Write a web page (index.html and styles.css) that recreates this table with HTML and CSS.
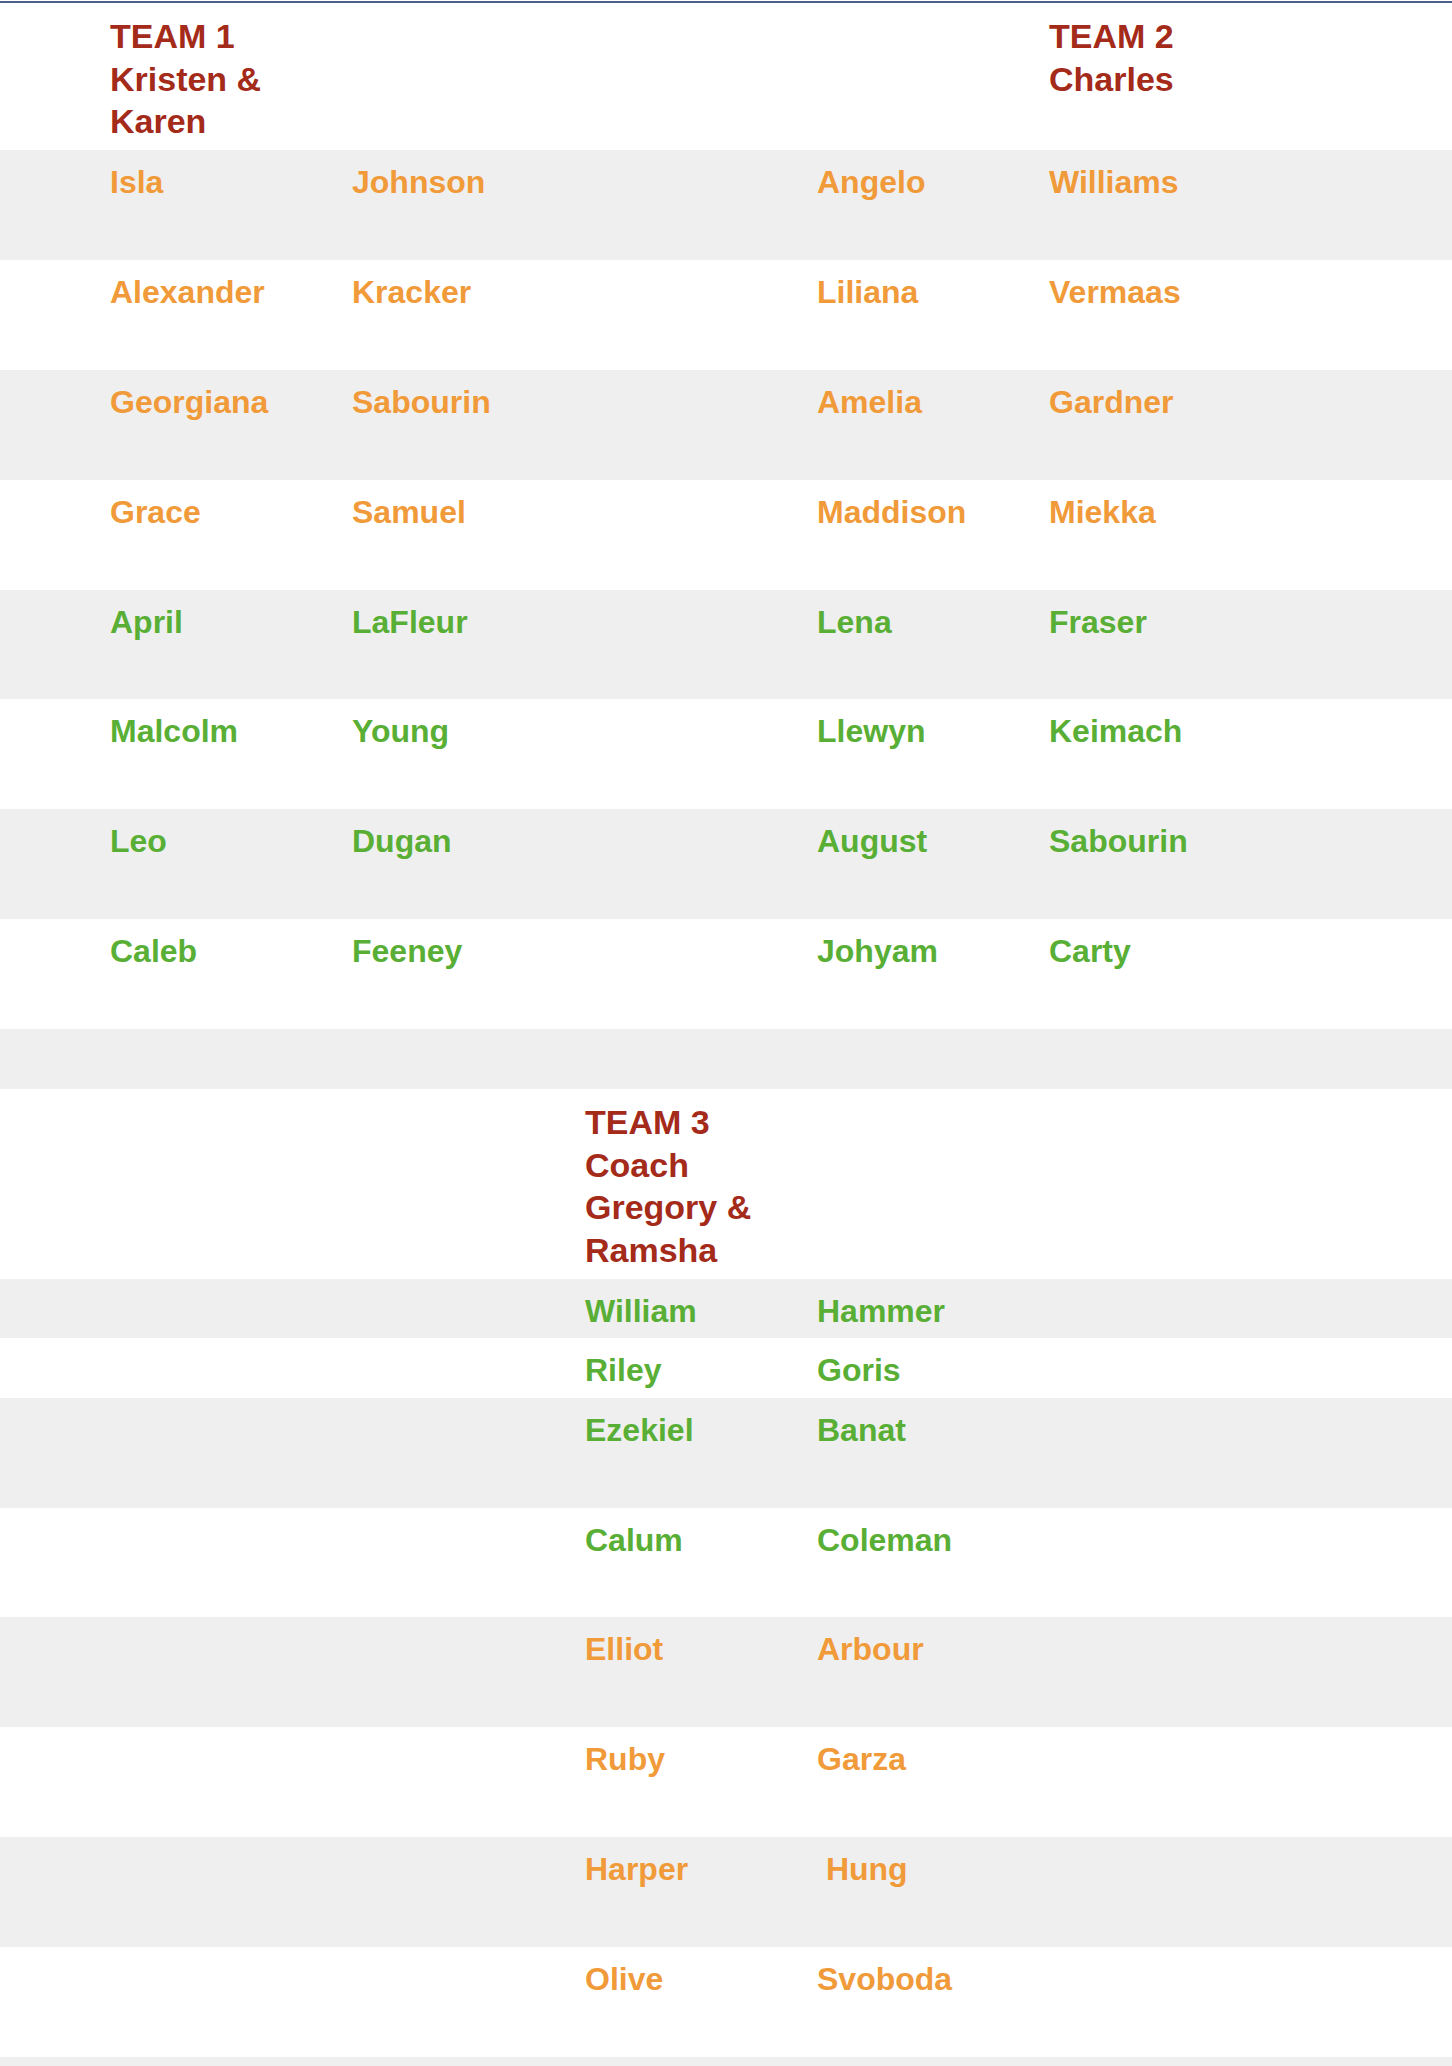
FILE: index.html
```html
<!DOCTYPE html>
<html>
<head>
<meta charset="utf-8">
<link rel="stylesheet" href="styles.css">
</head>
<body>
<div class="rule"></div>
<div class="roster">
  <div class="row head">
    <div class="c2 team">TEAM 1<br>Kristen &amp;<br>Karen</div>
    <div class="c6 team">TEAM 2<br>Charles</div>
  </div>
  <div class="row tall orange">
    <div class="c2">Isla</div><div class="c3">Johnson</div>
    <div class="c5">Angelo</div><div class="c6">Williams</div>
  </div>
  <div class="row tall orange">
    <div class="c2">Alexander</div><div class="c3">Kracker</div>
    <div class="c5">Liliana</div><div class="c6">Vermaas</div>
  </div>
  <div class="row tall orange">
    <div class="c2">Georgiana</div><div class="c3">Sabourin</div>
    <div class="c5">Amelia</div><div class="c6">Gardner</div>
  </div>
  <div class="row tall orange">
    <div class="c2">Grace</div><div class="c3">Samuel</div>
    <div class="c5">Maddison</div><div class="c6">Miekka</div>
  </div>
  <div class="row tall green">
    <div class="c2">April</div><div class="c3">LaFleur</div>
    <div class="c5">Lena</div><div class="c6">Fraser</div>
  </div>
  <div class="row tall green">
    <div class="c2">Malcolm</div><div class="c3">Young</div>
    <div class="c5">Llewyn</div><div class="c6">Keimach</div>
  </div>
  <div class="row tall green">
    <div class="c2">Leo</div><div class="c3">Dugan</div>
    <div class="c5">August</div><div class="c6">Sabourin</div>
  </div>
  <div class="row tall green">
    <div class="c2">Caleb</div><div class="c3">Feeney</div>
    <div class="c5">Johyam</div><div class="c6">Carty</div>
  </div>
  <div class="row spacer"></div>
  <div class="row head">
    <div class="c4 team">TEAM 3<br>Coach<br>Gregory &amp;<br>Ramsha</div>
  </div>
  <div class="row short-a green">
    <div class="c4">William</div><div class="c5">Hammer</div>
  </div>
  <div class="row short-b green">
    <div class="c4">Riley</div><div class="c5">Goris</div>
  </div>
  <div class="row tall green">
    <div class="c4">Ezekiel</div><div class="c5">Banat</div>
  </div>
  <div class="row tall green">
    <div class="c4">Calum</div><div class="c5">Coleman</div>
  </div>
  <div class="row tall orange">
    <div class="c4">Elliot</div><div class="c5">Arbour</div>
  </div>
  <div class="row tall orange">
    <div class="c4">Ruby</div><div class="c5">Garza</div>
  </div>
  <div class="row tall orange">
    <div class="c4">Harper</div><div class="c5">&nbsp;Hung</div>
  </div>
  <div class="row tall orange">
    <div class="c4">Olive</div><div class="c5">Svoboda</div>
  </div>
  <div class="row spacer"></div>
</div>
</body>
</html>
```
FILE: styles.css
```css
html, body {
  margin: 0;
  padding: 0;
  background: #ffffff;
}
body {
  font-family: "Liberation Sans", Arial, Helvetica, sans-serif;
  font-weight: bold;
}
.rule {
  margin-top: 1px;
  height: 2px;
  background: #4b5f8d;
}
.roster {
  display: flex;
  flex-direction: column;
}
.row {
  display: grid;
  grid-template-columns: 110px 242px 233px 232px 232px 1fr;
  align-items: start;
  box-sizing: border-box;
  padding-top: 12px;
  font-size: 32px;
  line-height: 40px;
}
.row:nth-child(even) {
  background: #efefef;
}
.head {
  padding-bottom: 7.5px;
}
.tall {
  height: 109.9px;
}
.short-a {
  height: 59px;
}
.short-b {
  height: 60px;
}
.spacer {
  height: 60px;
  padding: 0;
}
.team {
  color: #a42a1a;
  font-size: 34px;
  line-height: 42.5px;
}
.orange { color: #f19a39; }
.green { color: #59af35; }
.c2 { grid-column: 2; grid-row: 1; }
.c3 { grid-column: 3; grid-row: 1; }
.c4 { grid-column: 4; grid-row: 1; }
.c5 { grid-column: 5; grid-row: 1; }
.c6 { grid-column: 6; grid-row: 1; }
```
